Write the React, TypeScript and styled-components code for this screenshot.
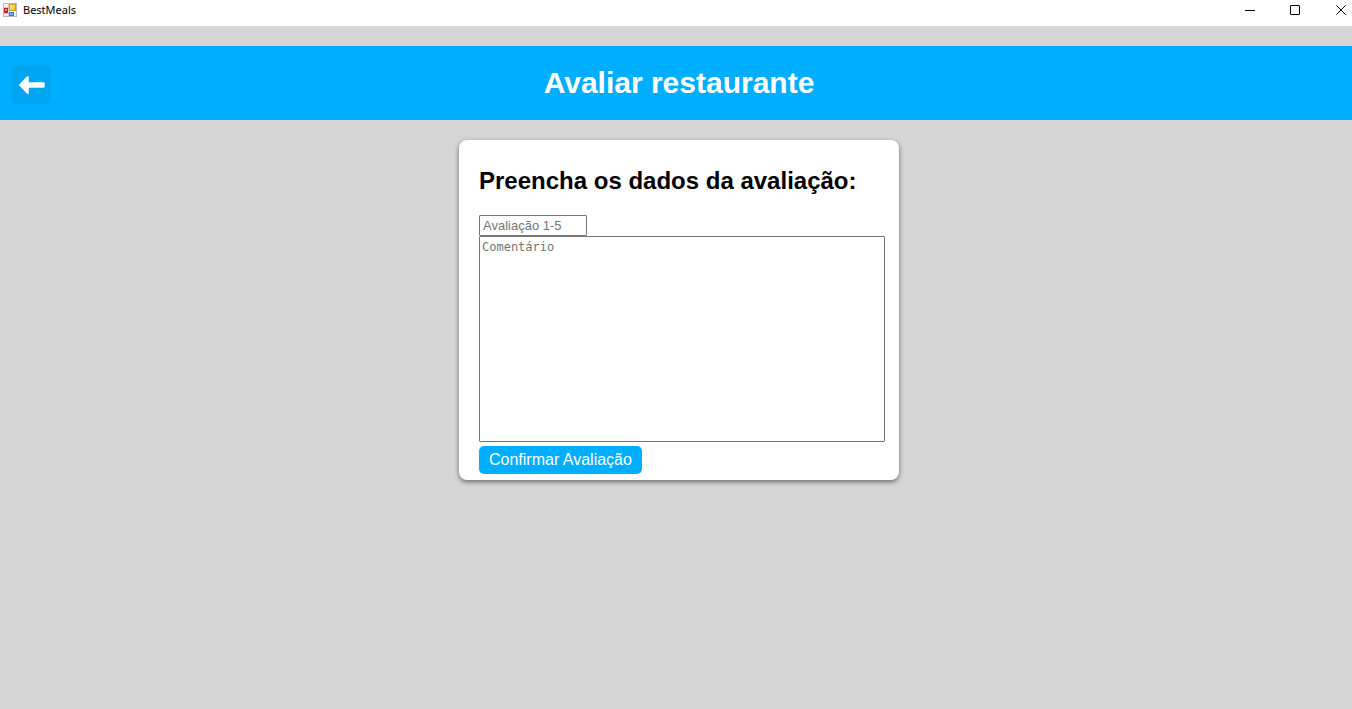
import React from 'react';
import styled, { createGlobalStyle } from 'styled-components';

const GlobalStyle = createGlobalStyle`
  * { box-sizing: border-box; }
  body {
    margin: 0;
    background: #d6d6d6;
    font-family: Arial, "Liberation Sans", sans-serif;
  }
`;

const TitleBar = styled.header`
  display: flex;
  align-items: flex-start;
  justify-content: space-between;
  height: 26px;
  background: #fff;
`;

const AppName = styled.div`
  display: flex;
  align-items: center;
  gap: 6px;
  padding: 2px 0 0 3px;
  color: #000;
  font: 11px/16px "Segoe UI", "Noto Sans", sans-serif;
`;

const WindowControls = styled.div`
  display: flex;
  gap: 24px;
`;

const WindowButton = styled.button`
  display: flex;
  align-items: center;
  justify-content: center;
  width: 22px;
  height: 20px;
  padding: 0;
  border: 0;
  background: none;
`;

const Banner = styled.div`
  display: grid;
  grid-template-columns: 40px 1fr 40px;
  align-items: center;
  height: 74px;
  margin-top: 20px;
  padding: 0 6px 0 12px;
  background: #00aeff;
`;

const BackButton = styled.button`
  display: flex;
  align-items: center;
  justify-content: center;
  width: 39px;
  height: 39px;
  margin-top: 3px;
  padding: 0;
  border: 0;
  border-radius: 5px;
  background: #00a5f2;
`;

const Title = styled.h1`
  margin: 0;
  color: #fff;
  font-size: 30px;
  line-height: 36px;
  text-align: center;
`;

const Content = styled.main`
  display: flex;
  justify-content: center;
  padding: 20px 0 20px 6px;
`;

const Card = styled.form`
  display: flex;
  flex-direction: column;
  align-items: flex-start;
  width: 100%;
  max-width: 440px;
  padding: 26px 14px 6px 20px;
  border-radius: 8px;
  background: #fff;
  box-shadow: 0 2px 5px rgba(0, 0, 0, 0.5);
`;

const FormTitle = styled.h2`
  margin: 0 0 20px;
  color: #000;
  font-size: 24px;
  line-height: 29px;
`;

const RatingInput = styled.input`
  width: 108px;
  height: 21px;
  padding: 1px 3px;
  border: 1px solid #767676;
  border-radius: 1px;
  font: 13px Arial, "Liberation Sans", sans-serif;
  &::placeholder { color: #757575; }
`;

const CommentInput = styled.textarea`
  width: 100%;
  height: 206px;
  margin-bottom: 4px;
  padding: 3px 2px;
  border: 1px solid #767676;
  border-radius: 1px;
  resize: none;
  font: 12px/15px "DejaVu Sans Mono", monospace;
  &::placeholder { color: #757575; }
`;

const SubmitButton = styled.button`
  padding: 5px 10px;
  border: 0;
  border-radius: 5px;
  background: #00aeff;
  color: #fff;
  font: 16px/18px Arial, "Liberation Sans", sans-serif;
`;

const AppIcon = () => (
  <svg width="14" height="14" viewBox="0 0 14 14" aria-hidden="true">
    <defs>
      <linearGradient id="gold" x2="1" y2="1">
        <stop stopColor="#fff0a0" />
        <stop offset="1" stopColor="#f5b70c" />
      </linearGradient>
    </defs>
    <rect x=".5" y=".5" width="13" height="13" fill="#f4f4f4" stroke="#b9b9b9" />
    <path d="M5.500 1v12M1 4.500h5M1 10.500h4" stroke="#cfcfcf" />
    <rect x="6.500" y="1.500" width="6" height="6" fill="url(#gold)" stroke="#d09a1c" />
    <rect x="1" y="5" width="4" height="5" fill="#c3241b" />
    <rect x="2" y="6" width="2" height="2" fill="#ee8b79" />
    <rect x="6" y="9" width="5" height="4" fill="#3b74d8" />
    <rect x="7" y="10" width="3" height="2" fill="#7eabf2" />
  </svg>
);

export default function App() {
  return (
    <>
      <GlobalStyle />
      <TitleBar>
        <AppName><AppIcon />BestMeals</AppName>
        <WindowControls>
          <WindowButton aria-label="Minimizar">
            <svg width="12" height="10"><path d="M2 5.500h10" stroke="#000" /></svg>
          </WindowButton>
          <WindowButton aria-label="Maximizar">
            <svg width="10" height="10"><rect x=".5" y=".5" width="9" height="9" rx=".5" fill="none" stroke="#000" /></svg>
          </WindowButton>
          <WindowButton aria-label="Fechar">
            <svg width="10" height="10"><path d="M.3.300 9.700 9.700M9.700.300.300 9.700" stroke="#000" /></svg>
          </WindowButton>
        </WindowControls>
      </TitleBar>
      <Banner>
        <BackButton aria-label="Voltar">
          <svg width="27" height="19" viewBox="0 0 27 19" fill="#fff" aria-hidden="true">
            <path d="M1.400 9.200 8.600 1.700Q10.800 -.2 10.800 2.600V7.200H25.500Q26.700 7.200 26.700 8.300V11.700Q26.700 12.800 25.500 12.800H10.800V17.400Q10.800 20.200 8.600 18.300L1.400 10.800Q.7 10 1.400 9.200Z" />
          </svg>
        </BackButton>
        <Title>Avaliar restaurante</Title>
      </Banner>
      <Content>
        <Card onSubmit={(e: React.FormEvent) => e.preventDefault()}>
          <FormTitle>Preencha os dados da avaliação:</FormTitle>
          <RatingInput type="number" min={1} max={5} placeholder="Avaliação 1-5" aria-label="Avaliação 1-5" />
          <CommentInput placeholder="Comentário" aria-label="Comentário" />
          <SubmitButton type="submit">Confirmar Avaliação</SubmitButton>
        </Card>
      </Content>
    </>
  );
}
